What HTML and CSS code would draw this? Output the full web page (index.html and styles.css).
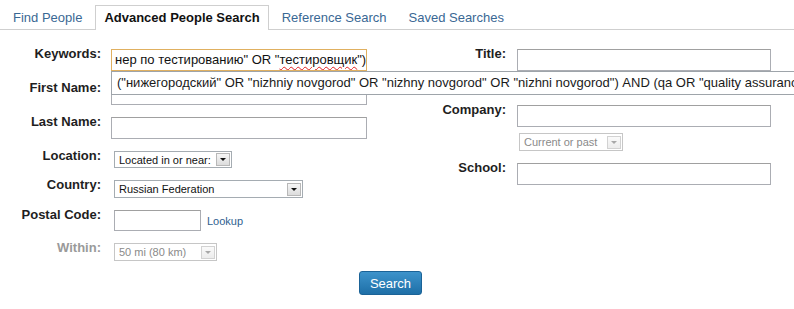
FILE: index.html
```html
<!DOCTYPE html>
<html lang="ru">
<head>
    <meta charset="UTF-8">
    <meta name="viewport" content="width=device-width, initial-scale=1.0">
    <title>Advanced People Search</title>
    <link rel="stylesheet" href="styles.css">
</head>
<body>
    <div class="tabs">
        <a class="tab" href="#">Find People</a>
        <a class="tab active" href="#">Advanced People Search</a>
        <a class="tab" href="#">Reference Search</a>
        <a class="tab" href="#">Saved Searches</a>
    </div>
    <form class="search-form">
        <div class="columns">
            <div class="col col-left">
                <div class="row">
                    <label>Keywords:</label>
                    <div class="field">
                        <div class="text wide focused">нер по тестированию" OR "<span class="misspelled">тестировщик</span>")</div>
                        <div class="suggest">("нижегородский" OR "nizhniy novgorod" OR "nizhny novgorod" OR "nizhni novgorod") AND (qa OR "quality assurance" OR "тестировщик")</div>
                    </div>
                </div>
                <div class="row">
                    <label for="first">First Name:</label>
                    <div class="field"><input class="text wide" type="text" id="first"></div>
                </div>
                <div class="row row-loose">
                    <label for="last">Last Name:</label>
                    <div class="field"><input class="text wide" type="text" id="last"></div>
                </div>
                <div class="row">
                    <label>Location:</label>
                    <div class="field indent">
                        <div class="select location"><span>Located in or near:</span><i class="arrow"></i></div>
                    </div>
                </div>
                <div class="row">
                    <label>Country:</label>
                    <div class="field indent">
                        <div class="select country"><span>Russian Federation</span><i class="arrow"></i></div>
                    </div>
                </div>
                <div class="row row-loose">
                    <label for="postal">Postal Code:</label>
                    <div class="field indent">
                        <input class="text postal" type="text" id="postal">
                        <a class="lookup" href="#">Lookup</a>
                    </div>
                </div>
                <div class="row last">
                    <label class="disabled">Within:</label>
                    <div class="field indent">
                        <div class="select within disabled"><span>50 mi (80 km)</span><i class="arrow"></i></div>
                    </div>
                </div>
            </div>
            <div class="col col-right">
                <div class="row row-title">
                    <label for="title">Title:</label>
                    <div class="field"><input class="text" type="text" id="title"></div>
                </div>
                <div class="row row-company">
                    <label for="company">Company:</label>
                    <div class="field"><input class="text" type="text" id="company"></div>
                </div>
                <div class="row row-sub">
                    <div class="select period disabled"><span>Current or past</span><i class="arrow"></i></div>
                </div>
                <div class="row">
                    <label for="school">School:</label>
                    <div class="field"><input class="text" type="text" id="school"></div>
                </div>
            </div>
        </div>
        <div class="actions">
            <button type="submit" class="btn">Search</button>
        </div>
    </form>
</body>
</html>
```

FILE: styles.css
```css
html, body {
    overflow: hidden;
}
body {
    margin: 0;
    background: #fff;
    font-family: "Liberation Sans", Arial, sans-serif;
    font-size: 13px;
    color: #222;
}
.tabs {
    display: flex;
    padding: 5px 0 0 4px;
    border-bottom: 1px solid #cfcfcf;
}
.tab {
    display: block;
    padding: 1px 8px 0;
    margin-right: 4px;
    line-height: 22px;
    border: 1px solid transparent;
    border-bottom: none;
    color: #3a6894;
    text-decoration: none;
}
.tab.active {
    border-color: #cfcfcf;
    background: #fff;
    color: #111;
    font-weight: bold;
    margin-bottom: -1px;
    padding-bottom: 1px;
}
.search-form {
    padding-top: 16px;
}
.columns {
    display: flex;
}
.col-left {
    width: 400px;
}
.row {
    display: flex;
    align-items: flex-start;
    margin-bottom: 9px;
}
.row-loose {
    margin-top: 2px;
}
.row.last {
    margin-bottom: 0;
}
.row label {
    flex: none;
    width: 101px;
    text-align: right;
    font-weight: bold;
    line-height: 15px;
    color: #1e1e1e;
}
.row label.disabled {
    color: #9a9a9a;
}
.col-right .row label {
    width: 106px;
}
.field {
    position: relative;
    display: flex;
    align-items: center;
    margin-left: 10px;
    margin-top: 3px;
}
.col-right .field {
    margin-left: 11px;
}
.field.indent {
    margin-left: 13px;
}
.row-title {
    margin-bottom: 31px;
}
.row-company {
    margin-bottom: 6px;
}
.row-sub {
    margin-left: 119px;
    margin-bottom: 9px;
}
.text {
    box-sizing: border-box;
    width: 254px;
    height: 22px;
    margin: 0;
    padding: 0 3px;
    border: 1px solid #abadb3;
    border-top-color: #a0a0a0;
    background: #fff;
    font-family: "Liberation Sans", Arial, sans-serif;
    font-size: 13px;
    line-height: 20px;
    color: #111;
    outline: none;
}
.text.wide {
    width: 256px;
}
.text.postal {
    width: 87px;
    height: 21px;
}
.text.focused {
    border-color: #e0b060;
    white-space: nowrap;
    overflow: hidden;
}
.misspelled {
    text-decoration: underline wavy #e02020;
    text-decoration-thickness: 1px;
    text-underline-offset: 2px;
}
.suggest {
    position: absolute;
    z-index: 10;
    left: 0;
    top: 22px;
    box-sizing: border-box;
    width: 720px;
    height: 24px;
    padding: 0 5px;
    border: 1px solid #9ea4aa;
    background: #fff;
    font-size: 13px;
    line-height: 22px;
    color: #1a1a1a;
    white-space: nowrap;
    overflow: hidden;
}
.lookup {
    margin-left: 6px;
    font-size: 11px;
    color: #2f5f8f;
    text-decoration: none;
}
.select {
    box-sizing: border-box;
    display: flex;
    align-items: center;
    height: 17px;
    border: 1px solid #a5acb2;
    background: #fff;
    font-size: 11px;
    color: #111;
}
.select span {
    flex: 1;
    padding-left: 4px;
    white-space: nowrap;
}
.select .arrow {
    position: relative;
    box-sizing: border-box;
    flex: none;
    width: 14px;
    height: 13px;
    margin-right: 1px;
    border: 1px solid #b8b8b8;
    background: linear-gradient(#f6f6f6, #dcdcdc);
}
.select .arrow::after {
    content: "";
    position: absolute;
    left: 3px;
    top: 4px;
    border-left: 3px solid transparent;
    border-right: 3px solid transparent;
    border-top: 3px solid #111;
}
.select.location {
    width: 118px;
}
.select.country {
    width: 189px;
    height: 18px;
}
.select.within {
    width: 103px;
    height: 18px;
}
.select.period {
    width: 104px;
    height: 18px;
}
.select.disabled {
    border-color: #c6c6c6;
    color: #8a8a8a;
}
.select.disabled .arrow {
    border-color: #d2d2d2;
    background: linear-gradient(#fafafa, #ececec);
}
.select.disabled .arrow::after {
    border-top-color: #a8a8a8;
}
.actions {
    margin-top: 10px;
    padding-left: 359px;
}
.btn {
    width: 63px;
    height: 24px;
    padding: 0;
    border: 1px solid #1b6397;
    border-radius: 3px;
    background: linear-gradient(#3d93cb, #1e6fa7);
    color: #fff;
    font-family: "Liberation Sans", Arial, sans-serif;
    font-size: 13px;
    cursor: pointer;
}
```
